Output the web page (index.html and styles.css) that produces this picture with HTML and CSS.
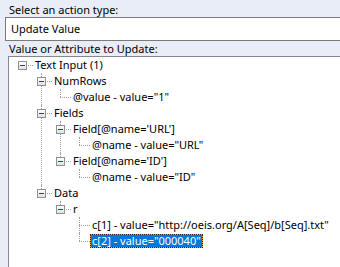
FILE: index.html
```html
<!DOCTYPE html>
<html lang="en">
<head>
    <meta charset="UTF-8">
    <meta name="viewport" content="width=device-width, initial-scale=1.0">
    <title>Update Value</title>
    <link rel="stylesheet" href="styles.css">
</head>
<body>
    <div class="panel">
        <div class="label first">Select an action type:</div>
        <div class="select">Update Value</div>
        <div class="label">Value or Attribute to Update:</div>

        <div class="treebox">
            <ul class="tree">
                <li>
                    <div class="row"><span class="exp"></span><span class="txt">Text Input (1)</span></div>
                    <ul class="tree">
                        <li>
                            <div class="row"><span class="exp"></span><span class="txt">NumRows</span></div>
                            <ul class="tree">
                                <li class="leaf"><div class="row"><span class="txt">@value - value="1"</span></div></li>
                            </ul>
                        </li>
                        <li>
                            <div class="row"><span class="exp"></span><span class="txt">Fields</span></div>
                            <ul class="tree">
                                <li>
                                    <div class="row"><span class="exp"></span><span class="txt">Field[@name='URL']</span></div>
                                    <ul class="tree">
                                        <li class="leaf"><div class="row"><span class="txt">@name - value="URL"</span></div></li>
                                    </ul>
                                </li>
                                <li>
                                    <div class="row"><span class="exp"></span><span class="txt">Field[@name='ID']</span></div>
                                    <ul class="tree">
                                        <li class="leaf"><div class="row"><span class="txt">@name - value="ID"</span></div></li>
                                    </ul>
                                </li>
                            </ul>
                        </li>
                        <li>
                            <div class="row"><span class="exp"></span><span class="txt">Data</span></div>
                            <ul class="tree">
                                <li>
                                    <div class="row"><span class="exp"></span><span class="txt">r</span></div>
                                    <ul class="tree">
                                        <li class="leaf"><div class="row"><span class="txt">c[1] - value="http://oeis.org/A[Seq]/b[Seq].txt"</span></div></li>
                                        <li class="leaf sel"><div class="row"><span class="txt">c[2] - value="000040"</span></div></li>
                                    </ul>
                                </li>
                            </ul>
                        </li>
                    </ul>
                </li>
            </ul>
        </div>
    </div>
</body>
</html>
```

FILE: styles.css
```css
*{
    margin: 0;
    padding: 0;
    box-sizing: border-box;
}
body{
    background-color: #e9edf8;
    font-family: "Segoe UI", "Noto Sans", sans-serif;
    font-size: 11px;
    color: #000;
    overflow: hidden;
}
.panel{
    width: 380px;
}
.label{
    height: 15px;
    line-height: 15px;
    padding-left: 9px;
}
.label.first{
    height: 17px;
    padding-top: 2px;
}
.select{
    margin-left: 5px;
    height: 24px;
    line-height: 22px;
    padding-left: 5px;
    border: 1px solid #7a7a7a;
    background-color: #fff;
}
.treebox{
    margin-left: 8px;
    height: 260px;
    border: 1px solid #828790;
    background-color: #fff;
}
.tree{
    list-style: none;
}
.tree .tree{
    padding-left: 19px;
}
.tree li{
    position: relative;
}
/* dotted connector lines */
.tree li::after{
    content: '';
    position: absolute;
    left: 13px;
    top: 8px;
    width: 11px;
    border-top: 1px dotted #a0a0a0;
}
.tree .tree > li::before{
    content: '';
    position: absolute;
    left: 13px;
    top: 0;
    bottom: 0;
    border-left: 1px dotted #a0a0a0;
}
.tree .tree > li:last-child::before{
    bottom: auto;
    height: 8px;
}
.row{
    height: 16px;
    display: flex;
    align-items: center;
    white-space: nowrap;
}
.exp{
    position: relative;
    z-index: 1;
    width: 9px;
    height: 9px;
    margin-left: 9px;
    margin-right: 6px;
    border: 1px solid #919191;
    background: linear-gradient(#ffffff, #e2e2e2);
}
.exp::after{
    content: '';
    position: absolute;
    left: 1px;
    top: 3px;
    width: 5px;
    height: 1px;
    background-color: #1d3f8a;
}
.leaf .txt{
    margin-left: 24px;
}
.txt{
    position: relative;
    z-index: 1;
    padding: 0 2px;
    line-height: 14px;
}
.sel .txt{
    background-color: #0078d7;
    color: #fff;
    box-shadow: inset 0 0 0 1px #e8a040;
    outline: 1px dotted #222;
    outline-offset: -1px;
}
```
